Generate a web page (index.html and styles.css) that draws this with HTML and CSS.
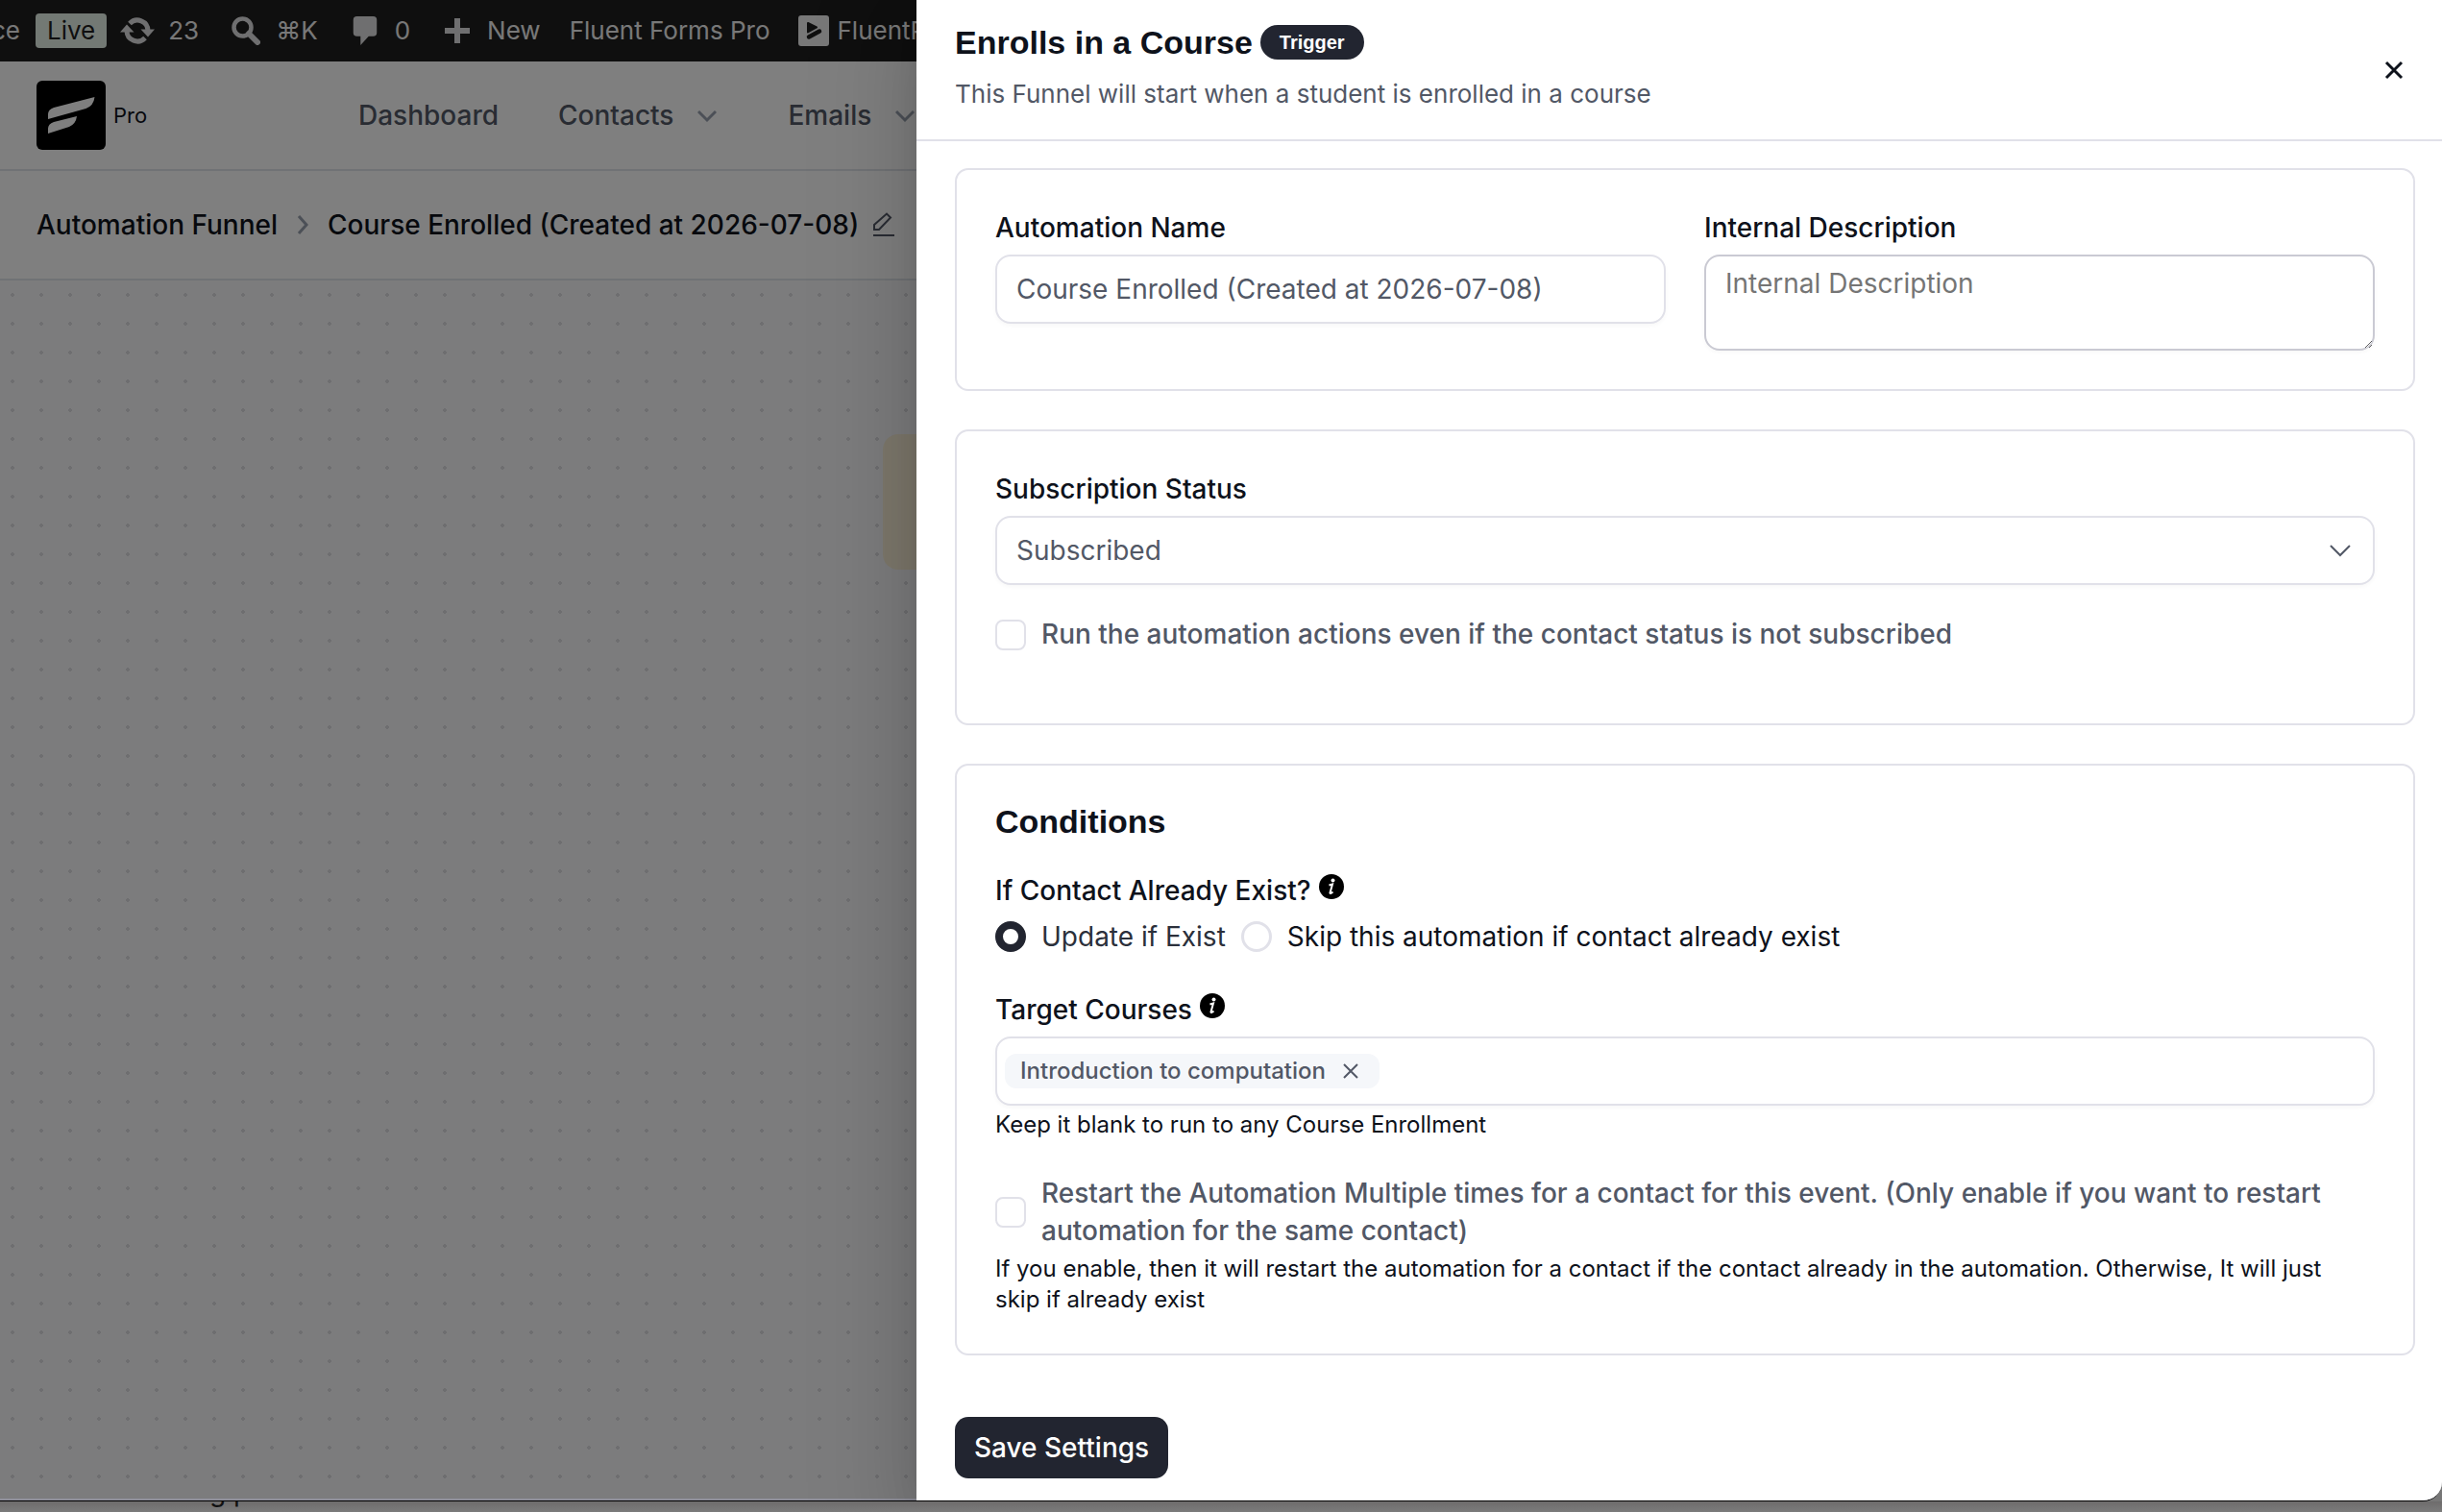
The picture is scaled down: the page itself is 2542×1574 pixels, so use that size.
FILE: index.html
```html
<!DOCTYPE html>
<html lang="en">
<head>
<meta charset="utf-8">
<title>Course Enrolled - Automation Funnel</title>
<link rel="stylesheet" href="styles.css">
</head>
<body>
<div class="window">
  <header class="adminbar">
    <span class="ab-site"><span class="ab-name">ce</span></span>
    <span class="ab-live">Live</span>
    <a class="ab-item ab-updates" href="#"><svg class="ab-icon ab-icon-wide" viewBox="0 0 36 30"><g fill="none" stroke="currentColor" stroke-width="5"><path d="M10 7.500A11 11 0 0 1 29 15"/><path d="M26 22.500A11 11 0 0 1 7 15"/></g><path d="M21.500 13.500H36L29 21.500zM0 16.500H14.500L7 8.500z" fill="currentColor"/></svg>23</a>
    <a class="ab-item ab-tool" href="#"><svg class="ab-icon" viewBox="0 0 30 30"><circle cx="11.500" cy="11.500" r="9" fill="none" stroke="currentColor" stroke-width="4.500"/><path d="M18 18l9 9" stroke="currentColor" stroke-width="6" stroke-linecap="round"/></svg><span>⌘K</span></a>
    <a class="ab-item ab-tool" href="#"><svg class="ab-icon" viewBox="0 0 30 34"><path d="M6 1h18q4 0 4 4v14q0 4-4 4h-5L10 33V23H6q-4 0-4-4V5q0-4 4-4z" fill="currentColor"/></svg>0</a>
    <a class="ab-item" href="#"><svg class="ab-icon" viewBox="0 0 30 30"><path d="M12 2h6v10h10v6H18v10h-6V18H2v-6h10z" fill="currentColor"/></svg>New</a>
    <a class="ab-item" href="#">Fluent Forms Pro</a>
    <a class="ab-item ab-player" href="#"><svg class="ab-player-icon" viewBox="0 0 32 32"><rect width="32" height="32" rx="3" fill="currentColor"/><path d="M10 8l9 4.500-9 5z" fill="#1e1e1e" stroke="#1e1e1e" stroke-width="2" stroke-linejoin="round"/><path d="M11 22.500l11-6" stroke="#1e1e1e" stroke-width="4.500" stroke-linecap="round"/></svg>FluentP</a>
  </header>
  <nav class="nav">
    <a class="brand" href="#"><svg class="logo" viewBox="0 0 72 72"><rect width="72" height="72" rx="6" fill="#000"/><path d="M12 40V35q0-5 6-7L60.500 17q-1 9-9 12zM12 55V50q0-5 6-7l24-6q-1 8-8 11z" fill="#fff"/></svg>Pro</a>
    <a class="nav-link" href="#">Dashboard</a>
    <a class="nav-link" href="#">Contacts <svg class="caret" viewBox="0 0 20 20"><path d="M1 6l9 9 9-9"/></svg></a>
    <a class="nav-link" href="#">Emails <svg class="caret" viewBox="0 0 20 20"><path d="M1 6l9 9 9-9"/></svg></a>
  </nav>
  <div class="crumbs">
    <a href="#">Automation Funnel</a>
    <svg class="crumb-sep" viewBox="0 0 12 20"><path d="M2 1l8 9-8 9"/></svg>
    <span>Course Enrolled (Created at 2026-07-08)</span>
    <button class="edit" type="button" aria-label="Rename"><svg viewBox="0 0 24 26"><path d="M2 18v-5L15 1.500l4 4L7 18zM1 24h22"/></svg></button>
  </div>
  <main class="canvas"><div class="node"></div></main>
  <div class="overlay"></div>
  <aside class="drawer" role="dialog" aria-labelledby="drawer-title">
    <header class="drawer-head">
      <div class="drawer-titles">
        <h2 id="drawer-title">Enrolls in a Course <span class="pill">Trigger</span></h2>
        <p>This Funnel will start when a student is enrolled in a course</p>
      </div>
      <button class="close" type="button" aria-label="Close"><svg viewBox="0 0 20 20"><path d="M2 2l16 16M18 2L2 18"/></svg></button>
    </header>
    <form class="drawer-body">
      <section class="card grid">
        <div class="field">
          <label for="name">Automation Name</label>
          <input class="control" id="name" type="text" value="Course Enrolled (Created at 2026-07-08)">
        </div>
        <div class="field">
          <label for="desc">Internal Description</label>
          <textarea class="control" id="desc" placeholder="Internal Description"></textarea>
        </div>
      </section>
      <section class="card status">
        <div class="field">
          <label for="status">Subscription Status</label>
          <div class="select"><select class="control" id="status"><option>Subscribed</option></select><svg class="select-caret" viewBox="0 0 24 24"><path d="M2 7l10 10L22 7"/></svg></div>
        </div>
        <label class="check"><input type="checkbox"><span>Run the automation actions even if the contact status is not subscribed</span></label>
      </section>
      <section class="card conditions">
        <h3>Conditions</h3>
        <fieldset class="radios">
          <legend>If Contact Already Exist? <svg class="info" viewBox="0 0 26 26"><circle cx="13" cy="13" r="13"/><circle class="mark" cx="14.500" cy="6.500" r="2"/><path class="stem" d="M10.500 11.500l3.500-1-2.500 9q0 1.500 3-1"/></svg></legend>
          <label class="radio on"><input type="radio" name="exist" checked><span>Update if Exist</span></label>
          <label class="radio"><input type="radio" name="exist"><span>Skip this automation if contact already exist</span></label>
        </fieldset>
        <div class="field">
          <label for="courses">Target Courses <svg class="info" viewBox="0 0 26 26"><circle cx="13" cy="13" r="13"/><circle class="mark" cx="14.500" cy="6.500" r="2"/><path class="stem" d="M10.500 11.500l3.500-1-2.500 9q0 1.500 3-1"/></svg></label>
          <div class="control tags">
            <span class="tag">Introduction to computation<button type="button" aria-label="Remove"><svg viewBox="0 0 16 16"><path d="M1 1l14 14M15 1L1 15"/></svg></button></span>
            <input id="courses" type="text">
          </div>
        </div>
        <p class="note">Keep it blank to run to any Course Enrollment</p>
        <label class="check restart"><input type="checkbox"><span>Restart the Automation Multiple times for a contact for this event. (Only enable if you want to restart automation for the same contact)</span></label>
        <p class="note">If you enable, then it will restart the automation for a contact if the contact already in the automation. Otherwise, It will just skip if already exist</p>
      </section>
      <button class="save" type="button">Save Settings</button>
    </form>
  </aside>
</div>
<div class="behind"><span>g p</span></div>
</body>
</html>
```
FILE: styles.css
```css
* { box-sizing: border-box; }
body {
  margin: 0;
  height: 100vh;
  overflow: hidden;
  display: flex;
  flex-direction: column;
  font: 400 28px/40px Inter, "Liberation Sans", sans-serif;
  color: #0e121b;
  background: #777;
}
a { color: inherit; text-decoration: none; }
h2, h3, p { margin: 0; }
button { padding: 0; border: 0; background: none; font: inherit; color: inherit; }
svg { display: block; flex: none; }

.window {
  position: relative;
  flex: 1;
  min-height: 0;
  display: flex;
  flex-direction: column;
  overflow: hidden;
  background: #fff;
  border-bottom: 1px solid #000;
  border-bottom-right-radius: 20px;
}
.behind {
  height: 11px;
  overflow: hidden;
  padding-left: 218px;
  background: linear-gradient(#6e6c6c, #7b7b7b);
}
.behind span { display: block; margin-top: -30px; color: #111; }

.adminbar {
  height: 64px;
  flex: none;
  display: flex;
  align-items: center;
  background: #1e1e1e;
  color: #f0f0f1;
  font-size: 26px;
}
.ab-site { width: 21px; display: flex; justify-content: flex-end; }
.ab-name { flex: none; }
.ab-live {
  margin: 0 14px 0 16px;
  padding: 0 12px;
  border-radius: 4px;
  line-height: 36px;
  background: #e6f2e8;
  color: #1e1e1e;
}
.ab-item { display: flex; align-items: center; gap: 16px; margin-right: 30px; white-space: nowrap; }
.ab-tool { margin-right: 34px; }
.ab-icon { width: 30px; height: 32px; opacity: .92; }
.ab-icon-wide { width: 36px; }
.ab-updates { gap: 14px; margin-right: 34px; }
.ab-player { gap: 8px; }
.ab-player-icon { width: 32px; height: 32px; }

.nav {
  height: 114px;
  flex: none;
  display: flex;
  align-items: center;
  border-bottom: 2px solid #e1e4ea;
  padding-left: 38px;
  color: #525866;
  font-weight: 500;
}
.brand { width: 335px; display: flex; align-items: center; gap: 8px; font-size: 22px; font-weight: 400; color: #0e121b; }
.logo { width: 72px; height: 72px; }
.nav-link { display: flex; align-items: center; gap: 25px; margin-right: 62px; }
.nav-link + .nav-link { margin-right: 74px; }
.caret { width: 20px; height: 20px; fill: none; stroke: #99a0ae; stroke-width: 3; }

.crumbs {
  height: 114px;
  flex: none;
  display: flex;
  align-items: center;
  gap: 20px;
  padding-left: 38px;
  border-bottom: 2px solid #e1e4ea;
  font-weight: 500;
}
.crumb-sep { width: 12px; height: 20px; fill: none; stroke: #99a0ae; stroke-width: 3; }
.edit { margin-left: -6px; }
.edit svg { width: 24px; height: 26px; fill: none; stroke: #525866; stroke-width: 2; }

.canvas {
  flex: 1;
  position: relative;
  background: radial-gradient(circle at 13px 15px, #dcdce0 2px, transparent 2px) 0 0 / 30px 30px #f8f8fb;
}
.node {
  position: absolute;
  left: 919px;
  top: 160px;
  width: 520px;
  height: 141px;
  border-radius: 16px;
  background: #faf1d8;
}
.overlay {
  position: absolute;
  inset: 0;
  background: rgba(0, 0, 0, .5);
  border-bottom: 2px solid #8f8f9a;
}

.drawer {
  position: absolute;
  top: 0;
  right: 0;
  bottom: 0;
  width: 1588px;
  max-width: 100%;
  background: #fff;
  box-shadow: 0 32px 96px 32px rgba(0, 0, 0, .08), 0 24px 64px rgba(0, 0, 0, .12), 0 16px 32px -16px rgba(0, 0, 0, .16);
}
.drawer-head {
  display: flex;
  justify-content: space-between;
  align-items: center;
  padding: 22px 40px;
  height: 147px;
  border-bottom: 2px solid #e1e1e9;
}
.drawer-titles { align-self: flex-start; }
h2, h3 { font: 700 34px/36px "Liberation Sans", Arial, sans-serif; }
h2 { display: flex; align-items: center; gap: 8px; padding: 4px 0; }
.pill {
  padding: 0 20px;
  border-radius: 18px;
  background: #222530;
  color: #fff;
  font-size: 20px;
  line-height: 36px;
}
.drawer-head p { margin-top: 12px; font-size: 26px; color: #525866; }
.close svg { width: 20px; height: 20px; fill: none; stroke: #0e121b; stroke-width: 3; }

.drawer-body { display: flex; flex-direction: column; gap: 40px; padding: 28px 28px 24px 40px; }
.card { border: 2px solid #e1e1e9; border-radius: 14px; padding: 40px; }
.grid { display: grid; grid-template-columns: 1fr 1fr; gap: 40px; }
.field { display: flex; flex-direction: column; gap: 8px; }
.field > label, legend { font-weight: 500; display: flex; gap: 8px; }
.control {
  width: 100%;
  height: 72px;
  border: 2px solid #e1e1e9;
  border-radius: 16px;
  padding: 0 20px;
  background: #fff;
  color: #525866;
  font: inherit;
  box-shadow: 0 2px 4px rgba(10, 13, 20, .03);
}
textarea.control { height: 100px; padding: 8px 20px; border-color: #cacad3; resize: vertical; }
textarea::placeholder { color: #757575; }
select.control { appearance: none; }
.select { position: relative; }
.select-caret { position: absolute; right: 24px; top: 24px; width: 24px; height: 24px; fill: none; stroke: #525866; stroke-width: 2; }

.check { display: flex; align-items: center; gap: 16px; font-weight: 500; color: #525866; line-height: 39px; }
.check input, .radio input {
  appearance: none;
  flex: none;
  width: 32px;
  height: 32px;
  margin: 0;
  border: 2px solid #e1e1e9;
  border-radius: 8px;
  background: #fff;
}
.status { padding-bottom: 73px; }
.status .check { margin-top: 32px; }
.radios { border: 0; margin: 34px 0 36px; padding: 0; display: flex; gap: 16px; min-width: 0; }
legend { padding: 0; margin-bottom: 8px; }
.radio { display: flex; align-items: center; gap: 16px; }
.radio input { border-radius: 50%; border-width: 3px; }
.radio input:checked { border: 8px solid #222530; }
.radio.on { color: #2b303b; }
.info { width: 26px; height: 26px; margin-top: 3px; }
.mark { fill: #fff; }
.stem { fill: none; stroke: #fff; stroke-width: 2; }
.tags { display: flex; align-items: center; padding: 0 8px; }
.tags input { flex: 1; border: 0; outline: 0; background: none; font: inherit; }
.tag { display: flex; align-items: center; gap: 18px; padding: 0 22px 0 16px; border-radius: 12px; background: #f5f7fa; font-size: 24px; font-weight: 500; line-height: 36px; }
.tag svg { width: 16px; height: 16px; fill: none; stroke: #525866; stroke-width: 2; }
.note { font-size: 24px; line-height: 32px; margin-top: 4px; padding-right: 40px; }
.restart { margin-top: 36px; }
.save { align-self: flex-start; margin-top: 24px; height: 64px; padding: 0 20px; border-radius: 14px; background: #222530; color: #fff; font-weight: 500; }
```
